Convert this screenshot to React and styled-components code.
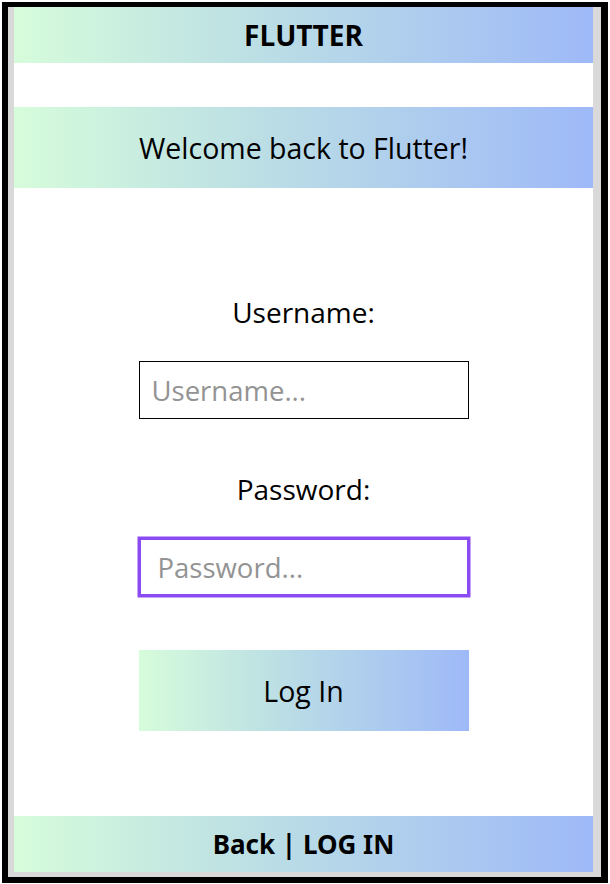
import React from "react";
import styled, { createGlobalStyle } from "styled-components";

const GlobalStyle = createGlobalStyle`
  html, body {
    margin: 0;
    padding: 0;
    background: #ffffff;
  }
  body {
    font-family: "Open Sans", "Liberation Sans", sans-serif;
    color: #000;
  }
`;

const brandGradient = "linear-gradient(90deg, #d6fcdb 0%, #bde0e4 40%, #9eb9f8 100%)";

const Frame = styled.div`
  box-sizing: border-box;
  margin: 2px 0 0 2px;
  width: 606px;
  height: 881px;
  border: 6px solid #000;
  border-top-width: 5px;
  border-right-width: 7px;
  background: #d9d9d9;
  padding: 0 8px 5px 6px;
  display: flex;
  flex-direction: column;
`;

const Screen = styled.div`
  flex: 1;
  background: #fff;
  display: flex;
  flex-direction: column;
  align-items: center;
`;

const Bar = styled.div`
  align-self: stretch;
  height: ${(p) => p.$height}px;
  margin-top: ${(p) => p.$top || 0}px;
  background: ${brandGradient};
  display: flex;
  align-items: center;
  justify-content: center;
  font-size: ${(p) => p.$size}px;
  font-weight: ${(p) => (p.$bold ? 700 : 400)};
`;

const FooterBar = styled(Bar)`
  margin-top: auto;
  font-family: "Noto Sans", "Open Sans", sans-serif;
`;

const Label = styled.label`
  font-size: 28px;
  line-height: 36px;
  margin-top: ${(p) => p.$top}px;
`;

const Field = styled.input`
  box-sizing: border-box;
  width: 330px;
  height: 58px;
  margin-top: 31px;
  border: ${(p) => (p.$active ? "2px solid #8b4bf4" : "1.5px solid #000")};
  box-shadow: ${(p) => (p.$active ? "0 0 0 1.5px #8b4bf4" : "none")};
  padding: 0 0 0 ${(p) => (p.$active ? 17 : 12)}px;
  font-family: "Open Sans", sans-serif;
  font-size: 27.5px;
  outline: none;
  background: #fff;

  &::placeholder {
    color: #939393;
  }
`;

const LoginButton = styled.button`
  width: 330px;
  height: 81px;
  margin-top: 54px;
  border: none;
  background: ${brandGradient};
  font-family: "Open Sans", sans-serif;
  font-size: 28.5px;
  color: #000;
  cursor: pointer;
`;

export default function App() {
  return (
    <>
      <GlobalStyle />
      <Frame>
        <Screen>
          <Bar $height={56} $size={28} $bold>FLUTTER</Bar>
          <Bar $height={81} $top={44} $size={28.5}>Welcome back to Flutter!</Bar>
          <Label $top={106}>Username:</Label>
          <Field placeholder="Username..." />
          <Label $top={52}>Password:</Label>
          <Field type="password" placeholder="Password..." $active />
          <LoginButton>Log In</LoginButton>
          <FooterBar $height={56} $size={26} $bold>Back | LOG IN</FooterBar>
        </Screen>
      </Frame>
    </>
  );
}
